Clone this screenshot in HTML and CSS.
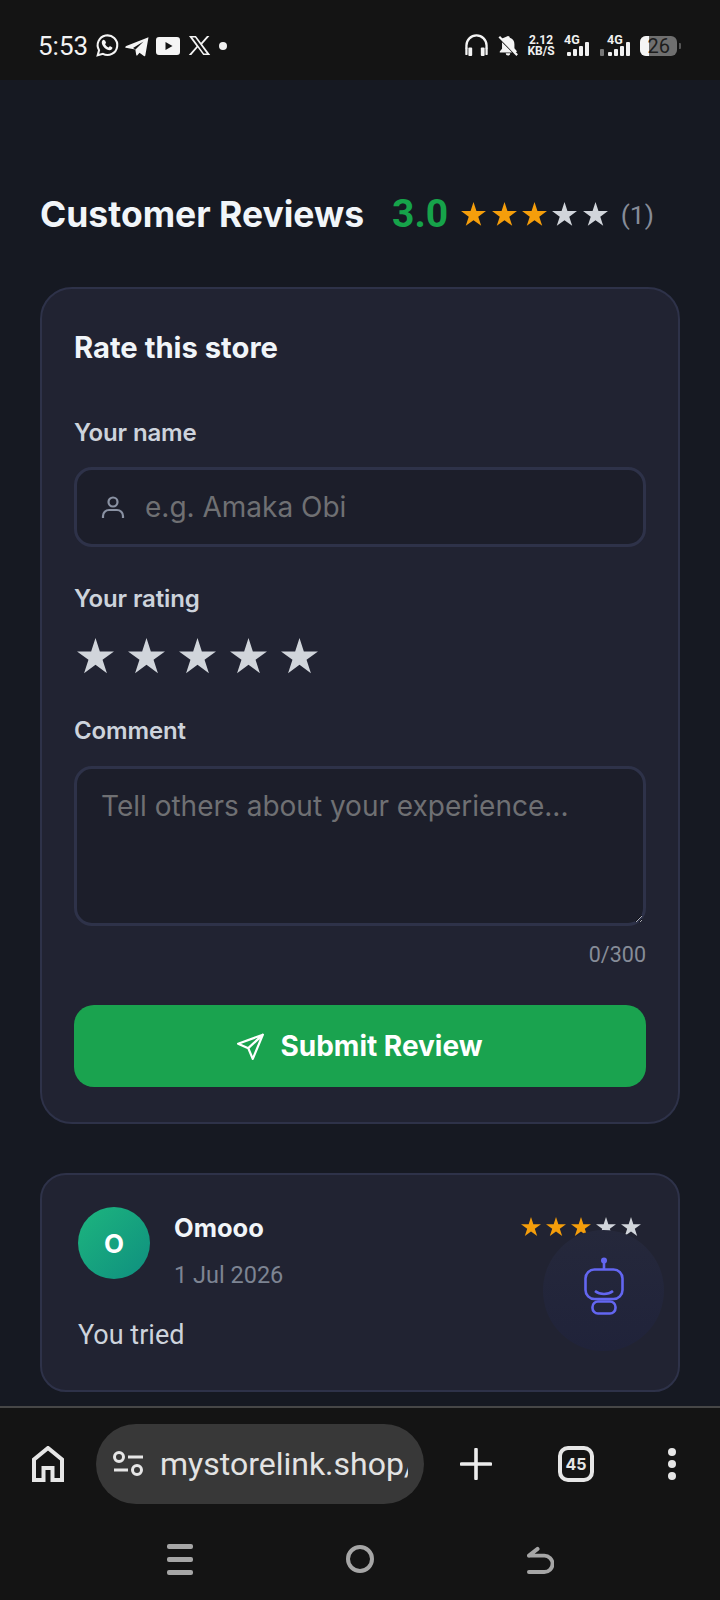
FILE: index.html
```html
<!DOCTYPE html>
<html lang="en">
<head>
<meta charset="utf-8">
<title>Customer Reviews</title>
<link rel="stylesheet" href="styles.css">
</head>
<body>
<svg class="defs" width="0" height="0" aria-hidden="true"><defs>
<symbol id="star" viewBox="0 0 24 24"><path d="M12 0L14.820 8.720 23.980 8.710 16.570 14.080 19.410 22.790 12 17.400 4.590 22.790 7.430 14.080 .02 8.710 9.180 8.720z"/></symbol>
</defs></svg>
<div class="phone">
  <header class="status">
    <div class="status-left">
      <span class="time">5:53</span>
      <svg class="si wa" viewBox="0 0 24 24"><path class="ln" d="M2.600 21.400l1.300-4.900A9.400 9.400 0 1 1 7.600 20z"/><path class="fl" d="M8.800 6.900c.5 0 .8.1 1 .6l.7 1.600c.1.300 0 .6-.2.800l-.6.800c.7 1.400 1.900 2.500 3.400 3.200l.8-.9c.2-.3.5-.3.8-.2l1.600.8c.4.2.5.4.4.8-.2 1.300-1.300 2.100-2.600 2.100-3.500-.2-7.400-3.800-7.600-7.400 0-1.200.8-2.700 1.800-2.700z"/></svg>
      <svg class="si tg" viewBox="0 0 24 24"><path class="fl" d="M.6 12.300L23.500 3.200 20.300 21.600c-.1.700-.9.900-1.400.5l-4.400-3.300-2.300 2.600c-.3.300-.8.200-.9-.2l-1-5.800-9.600-1.700c-.8-.2-.8-.5-.1-.7zM10.500 15.400L18.500 7.600 8 14z"/></svg>
      <svg class="si yt" viewBox="0 0 26 20"><path class="fl" d="M4 1h18a3 3 0 0 1 3 3v12a3 3 0 0 1-3 3H4a3 3 0 0 1-3-3V4a3 3 0 0 1 3-3zm6.500 5v8l7-4z" fill-rule="evenodd"/></svg>
      <svg class="si xl" viewBox="0 0 24 24"><path class="fl" fill-rule="evenodd" d="M1 2h7.300l5.300 7.200L19.800 2h2.600l-7.600 8.800L23.200 22h-7.300l-5.800-7.800L3.400 22H.8l8.100-9.300zm3.500 1.700l12.200 16.600h2.900L7.400 3.700z"/></svg>
      <span class="dot"></span>
    </div>
    <div class="status-right">
      <svg class="hp" viewBox="0 0 26 24"><path class="ln2" d="M2.500 15v-3a10.500 10.500 0 0 1 21 0v3"/><rect class="fl" x="4.500" y="14" width="4" height="9" rx="1"/><rect class="fl" x="17.500" y="14" width="4" height="9" rx="1"/><rect class="fl" x="1.300" y="14" width="2.400" height="8" rx="1"/><rect class="fl" x="22.300" y="14" width="2.400" height="8" rx="1"/></svg>
      <svg class="bell" viewBox="0 0 24 24"><path class="fl" d="M12 1.500a2 2 0 0 1 2 2c3.500 1 5 3.800 5 7v4.500l2.500 3v1H18L5.500 5.500 5 4.500zM5.400 8.500L16.400 19.500H3v-1l2.500-3V10zM9.500 20.500h5a2.500 2.500 0 0 1-5 0z"/><path class="ln2" d="M2.500 2.500l19.500 20"/></svg>
      <div class="speed"><span>2.12</span><span>KB/S</span></div>
      <div class="net">
        <span class="g4">4G</span>
        <div class="bars"><i class="b1"></i><i class="b2"></i><i class="b3"></i><i class="b4"></i></div>
      </div>
      <div class="net net2">
        <span class="g4">4G</span>
        <div class="bars"><em class="updown"></em><i class="b1"></i><i class="b2"></i><i class="b3"></i><i class="b4"></i></div>
      </div>
      <div class="battery"><span class="charge"></span><span class="level">26</span></div>
      <span class="cap"></span>
    </div>
  </header>

  <main class="page">
    <div class="heading">
      <h1>Customer Reviews</h1>
      <span class="score">3.0</span>
      <div class="stars hstars">
        <svg class="on"><use href="#star"/></svg><svg class="on"><use href="#star"/></svg><svg class="on"><use href="#star"/></svg><svg><use href="#star"/></svg><svg><use href="#star"/></svg>
      </div>
      <span class="count">(1)</span>
    </div>

    <form class="card form-card">
      <h2>Rate this store</h2>
      <label class="label name-label">Your name</label>
      <div class="input-wrap">
        <svg class="user" viewBox="0 0 24 24"><circle cx="12" cy="7" r="4.500"/><path d="M2 23v-2a6 6 0 0 1 6-6h8a6 6 0 0 1 6 6v2"/></svg>
        <input class="name-input" type="text" placeholder="e.g. Amaka Obi">
      </div>
      <label class="label rating-label">Your rating</label>
      <div class="stars rate-stars">
        <svg><use href="#star"/></svg><svg><use href="#star"/></svg><svg><use href="#star"/></svg><svg><use href="#star"/></svg><svg><use href="#star"/></svg>
      </div>
      <label class="label comment-label">Comment</label>
      <textarea class="comment" placeholder="Tell others about your experience..."></textarea>
      <div class="counter">0/300</div>
      <button class="submit" type="button">
        <svg viewBox="0 0 24 24"><path d="M23 1.500L1 9.500l9 4 4 9.500zM23 1.500L10 13.500"/></svg>
        <span>Submit Review</span>
      </button>
    </form>

    <article class="card review">
      <div class="review-head">
        <div class="avatar">O</div>
        <div class="who">
          <div class="who-name">Omooo</div>
          <div class="who-date">1 Jul 2026</div>
        </div>
        <div class="stars rstars">
          <svg class="on"><use href="#star"/></svg><svg class="on"><use href="#star"/></svg><svg class="on"><use href="#star"/></svg><svg><use href="#star"/></svg><svg><use href="#star"/></svg>
        </div>
      </div>
      <p class="review-text">You tried</p>
    </article>

    <button class="fab" type="button" aria-label="Assistant">
      <svg viewBox="0 0 40 58"><circle class="bot-f" cx="20" cy="3.500" r="3"/><path d="M20 5v7"/><rect x="1.500" y="12.500" width="37" height="29.500" rx="9"/><path d="M11 34c5 4 13 4 18 0"/><rect x="8.500" y="44.500" width="23" height="12" rx="5.500"/></svg>
    </button>
  </main>

  <footer class="browser">
    <div class="toolbar">
      <svg class="home" viewBox="0 0 32 36"><path d="M2 34V13.500L16 2l14 11.500V34H20.500V22h-9v12z"/></svg>
      <div class="url">
        <svg class="tune" viewBox="0 0 30 26"><circle cx="6" cy="6" r="4.500"/><path d="M15 6h15M1 19h14"/><circle cx="24" cy="19" r="4.500"/></svg>
        <span class="url-text">mystorelink.shop/store</span>
      </div>
      <svg class="plus" viewBox="0 0 32 32"><path d="M16 1.500v29M1.500 16h29"/></svg>
      <div class="tabs">45</div>
      <div class="more"><i></i><i></i><i></i></div>
    </div>
    <nav class="nav">
      <div class="menu"><i></i><i></i><i></i></div>
      <span class="circle"></span>
      <svg class="back" viewBox="0 0 28 30"><path d="M2 28h16a8.500 8.500 0 0 0 0-17H2M2 11L11 4"/></svg>
    </nav>
  </footer>
</div>
</body>
</html>
```
FILE: styles.css
```css
* { box-sizing: border-box; }
html, body { margin: 0; padding: 0; background: #141414; }
body { font-family: "Inter", "Liberation Sans", sans-serif; }
.defs { position: absolute; }
.phone { width: 720px; height: 1600px; display: flex; flex-direction: column; overflow: hidden; }

/* status bar */
.status { height: 80px; flex: none; background: #141414; display: flex; justify-content: space-between; align-items: center; padding: 11px 39px 0 38px; color: #fff; }
.status-left, .status-right { display: flex; align-items: center; }
.time { font: 400 26px "Roboto", sans-serif; color: #f2f2f2; }
.si { display: block; }
.fl { fill: #f5f5f5; }
.ln { fill: none; stroke: #f5f5f5; stroke-width: 2; }
.ln2 { fill: none; stroke: #f5f5f5; stroke-width: 2.400; }
.wa { width: 25px; height: 25px; margin-left: 7px; }
.tg { width: 24px; height: 24px; margin-left: 5px; }
.yt { width: 26px; height: 20px; margin-left: 6px; }
.xl { width: 23px; height: 23px; margin-left: 7px; }
.dot { width: 8px; height: 8px; border-radius: 50%; background: #f0f0f0; margin-left: 8px; }
.hp { width: 25px; height: 23px; }
.bell { width: 22px; height: 23px; margin-left: 8px; }
.speed { display: flex; flex-direction: column; align-items: center; width: 26px; margin-left: 9px; font: 700 12px/11px "Roboto", sans-serif; color: #f0f0f0; }
.net { display: flex; flex-direction: column; align-items: flex-start; width: 23px; margin-left: 10px; height: 21px; }
.net2 { width: 29px; margin-left: 13px; }
.net2 .g4 { margin-left: 7px; }
.g4 { font: 700 12.500px/9px "Roboto", sans-serif; color: #f0f0f0; }
.bars { display: flex; align-items: flex-end; gap: 2.500px; height: 14px; margin-top: -2px; margin-left: 3px; }
.net2 .bars { margin-left: 0; }
.bars i { display: block; width: 3.500px; background: #f0f0f0; border-radius: 1px; }
.b1 { height: 4px; } .b2 { height: 7px; } .b3 { height: 10px; } .b4 { height: 14px; }
.updown { display: block; width: 4px; height: 7px; background: #777; margin-right: 1.500px; border-radius: 1px; }
.battery { position: relative; width: 37px; height: 20px; margin-left: 11px; border-radius: 6px; background: #6f6f6f; display: flex; justify-content: flex-end; align-items: center; padding-right: 7px; }
.charge { position: absolute; left: 0; top: 0; bottom: 0; width: 9px; background: #f5f5f5; border-radius: 6px 0 0 6px; }
.level { position: relative; font: 400 20px/20px "Roboto", sans-serif; color: #1d1d1d; }
.cap { width: 2px; height: 6px; background: #555; margin-left: 2px; border-radius: 0 1px 1px 0; }

/* page */
.page { position: relative; flex: 1; min-height: 0; background: #161922; padding: 110px 40px 0; overflow: hidden; }
.heading { display: flex; align-items: center; height: 48px; }
h1 { margin: 0; font: 700 35.500px "Inter", sans-serif; color: #f1f5f9; }
.score { margin-left: 28px; font: 700 39px "Roboto", sans-serif; color: #16a34a; }
.stars { display: flex; }
.stars svg { display: block; fill: #d1d5db; }
.stars svg.on { fill: #f59e0b; }
.hstars { margin-left: 13px; gap: 5.400px; }
.hstars svg { width: 25px; height: 25px; }
.count { margin-left: 13px; font: 400 26.500px "Roboto", sans-serif; color: #868c98; }

.card { background: #212332; border: 2px solid #2e3249; }
.form-card { margin-top: 49px; height: 837px; border-radius: 32px; padding: 41px 32px 0; display: flex; flex-direction: column; }
h2 { margin: 0; font: 700 29.200px/36px "Inter", sans-serif; color: #f1f5f9; }
.label { display: block; font: 600 24px/30px "Inter", sans-serif; color: #cdd3dc; letter-spacing: -0.15px; }
.name-label { margin-top: 52px; }
.input-wrap { margin-top: 19px; height: 80px; flex: none; display: flex; align-items: center; background: #1c1e2a; border: 3px solid #2e3249; border-radius: 18px; padding-left: 24px; }
.user { width: 24px; height: 24px; flex: none; fill: none; stroke: #8a92a3; stroke-width: 2.200; }
.name-input { flex: 1; min-width: 0; margin-left: 20px; background: transparent; border: 0; outline: 0; padding: 0; font: 400 28px "Inter", sans-serif; color: #fff; }
.name-input::placeholder, .comment::placeholder { color: #6f7073; opacity: 1; }
.rating-label { margin-top: 37px; }
.rate-stars { margin-top: 24px; gap: 14px; padding-left: 3px; }
.rate-stars svg { width: 37px; height: 37px; }
.comment-label { margin-top: 41px; }
.comment { display: block; margin-top: 20px; width: 100%; height: 160px; flex: none; background: #1c1e2a; border: 3px solid #2e3249; border-radius: 18px; padding: 19px 24px; outline: 0; font: 400 28px/36px "Inter", sans-serif; color: #fff; }
.counter { margin-top: 16px; text-align: right; font: 400 21.500px/26px "Roboto", sans-serif; color: #868c98; }
.submit { margin-top: 37px; height: 82px; flex: none; border: 0; border-radius: 20px; background: #1aa34f; color: #fff; display: flex; align-items: center; justify-content: center; gap: 16px; font: 700 28px "Inter", sans-serif; }
.submit svg { width: 27px; height: 27px; fill: none; stroke: #fff; stroke-width: 2; stroke-linejoin: round; stroke-linecap: round; }

.review { margin-top: 49px; height: 219px; border-radius: 26px; padding: 32px 36px 0; }
.review-head { display: flex; align-items: flex-start; }
.avatar { width: 72px; height: 72px; flex: none; border-radius: 50%; background: linear-gradient(135deg, #1db57e, #0f8f7f); color: #fff; font-size: 26px; font-weight: 700; display: flex; align-items: center; justify-content: center; }
.who { margin-left: 24px; flex: 1; }
.who-name { font: 700 25.500px/34px "Inter", sans-serif; color: #f1f5f9; margin-top: 4px; }
.who-date { margin-top: 16px; font: 400 23.500px/28px "Roboto", sans-serif; color: #7d8492; }
.rstars { gap: 5px; margin: 10px 1px 0 0; }
.rstars svg { width: 20px; height: 20px; }
.review-text { margin: 29px 0 0; font: 400 27px/34px "Roboto", sans-serif; color: #cdd3dc; }

.fab { position: absolute; left: 543px; top: 1150px; width: 121px; height: 121px; border: 0; padding: 0 0 10px; border-radius: 50%; background: linear-gradient(180deg, #25283b, #20233a); display: flex; align-items: center; justify-content: center; }
.fab svg { width: 40px; height: 58px; fill: none; stroke: #6366f1; stroke-width: 2.600; }
.fab .bot-f { fill: #6366f1; stroke: none; }

/* browser chrome */
.browser { height: 194px; flex: none; background: #141414; border-top: 2px solid #474747; }
.toolbar { position: relative; height: 116px; padding: 16px 0 0 32px; display: flex; align-items: flex-start; }
.home { width: 32px; height: 36px; margin-top: 22px; fill: none; stroke: #e6e6e6; stroke-width: 4; flex: none; }
.url { margin-left: 32px; width: 328px; height: 80px; flex: none; border-radius: 40px; background: #383838; display: flex; align-items: center; padding: 0 16px 0 17px; overflow: hidden; }
.tune { width: 30px; height: 26px; flex: none; fill: none; stroke: #e6e6e6; stroke-width: 3; }
.url-text { margin-left: 17px; font: 400 32px "Roboto", sans-serif; color: #e3e3e3; white-space: nowrap; overflow: hidden; flex: 1; min-width: 0; }
.plus { width: 32px; height: 32px; margin: 24px 0 0 36px; fill: none; stroke: #ededed; stroke-width: 3.600; stroke-linecap: round; flex: none; }
.tabs { width: 36px; height: 36px; margin: 22px 0 0 66px; border: 4px solid #e6e6e6; border-radius: 10px; display: flex; align-items: center; justify-content: center; font-size: 16px; font-weight: 700; color: #e6e6e6; flex: none; }
.more { display: flex; flex-direction: column; gap: 4px; margin: 24px 0 0 74px; }
.more i { display: block; width: 8px; height: 8px; border-radius: 50%; background: #e6e6e6; }
.nav { height: 70px; display: flex; align-items: center; padding: 0 166px 0 167px; justify-content: space-between; }
.menu { display: flex; flex-direction: column; gap: 8px; width: 26px; }
.menu i { display: block; height: 5px; border-radius: 2px; background: #a6a6a6; }
.circle { width: 28px; height: 28px; border: 4px solid #a6a6a6; border-radius: 50%; }
.back { width: 27px; height: 29px; fill: none; stroke: #a6a6a6; stroke-width: 4; stroke-linecap: round; }
```
